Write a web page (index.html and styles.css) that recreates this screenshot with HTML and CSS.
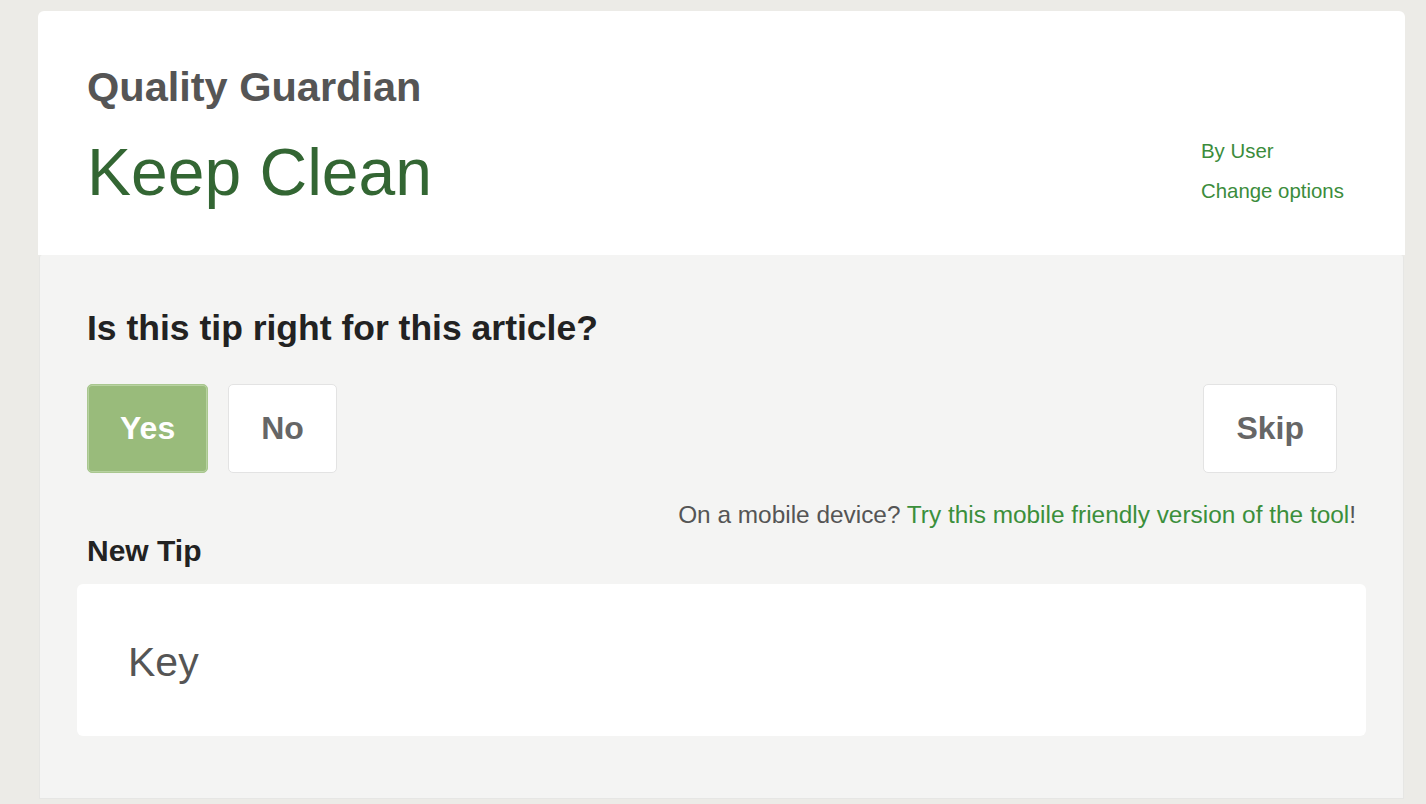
FILE: index.html
```html
<!DOCTYPE html>
<html lang="en">
<head>
<meta charset="utf-8">
<title>Quality Guardian</title>
<link rel="stylesheet" href="styles.css">
</head>
<body>
<div class="page">
  <header class="card-head">
    <div class="titles">
      <h1 class="app-name">Quality Guardian</h1>
      <h2 class="tool-name">Keep Clean</h2>
    </div>
    <div class="side-links">
      <a class="side-link" href="#">By User</a>
      <a class="side-link" href="#">Change options</a>
    </div>
  </header>
  <section class="panel">
    <div class="inner">
      <h3 class="question">Is this tip right for this article?</h3>
      <div class="actions">
        <button class="btn btn-yes" type="button">Yes</button>
        <button class="btn" type="button">No</button>
        <button class="btn btn-skip" type="button">Skip</button>
      </div>
      <p class="mobile-note">On a mobile device? <a href="#">Try this mobile friendly version of the tool</a>!</p>
      <h4 class="tip-label">New Tip</h4>
    </div>
    <div class="tip-box">Key</div>
  </section>
</div>
</body>
</html>
```

FILE: styles.css
```css
html, body {
  margin: 0;
  padding: 0;
}
body {
  background: #ecebe7;
  font-family: "Liberation Sans", Arial, Helvetica, sans-serif;
  height: 804px;
  overflow: hidden;
}
.page {
  margin: 11px 21px 0 38px;
  display: flex;
  flex-direction: column;
}
.card-head {
  background: #ffffff;
  border-radius: 6px 6px 0 0;
  display: flex;
  justify-content: space-between;
  align-items: flex-end;
  padding: 52px 57px 45px 49px;
}
.titles {
  display: flex;
  flex-direction: column;
}
.app-name {
  margin: 0;
  font-size: 41.5px;
  line-height: 48px;
  font-weight: 700;
  color: #555555;
}
.tool-name {
  margin: 23px 0 0 0;
  font-size: 66px;
  line-height: 76px;
  font-weight: 400;
  color: #336633;
}
.side-links {
  display: flex;
  flex-direction: column;
  width: 147px;
  margin-bottom: -1px;
}
.side-link {
  font-size: 20.4px;
  line-height: 40px;
  color: #3b8c3b;
  text-decoration: none;
  white-space: nowrap;
}
.panel {
  margin: 0 1px;
  background: #f4f4f3;
  border: 1px solid #e6e6e4;
  border-top: none;
  border-radius: 3px 3px 0 0;
  padding: 52px 37px 62px 37px;
  box-sizing: border-box;
  height: 544px;
}
.inner {
  padding: 0 10px;
}
.question {
  margin: 0;
  font-size: 35.5px;
  line-height: 42px;
  font-weight: 700;
  color: #222222;
}
.actions {
  display: flex;
  gap: 20px;
  margin-top: 35px;
}
.btn {
  height: 89px;
  box-sizing: border-box;
  padding: 0 32px;
  background: #ffffff;
  border: 1px solid #e3e3e3;
  border-radius: 5px;
  font-family: "Liberation Sans", Arial, Helvetica, sans-serif;
  font-size: 32px;
  font-weight: 700;
  color: #666666;
  display: flex;
  align-items: center;
  justify-content: center;
  cursor: pointer;
}
.btn-yes {
  background: #99bb7b;
  border-color: #a9c78f;
  box-shadow: inset 0 0 0 1px #b8d2a1;
  color: #ffffff;
}
.btn-skip {
  margin-left: auto;
  margin-right: 19px;
}
.mobile-note {
  margin: 28px 0 0 0;
  text-align: right;
  font-size: 24.4px;
  line-height: 28px;
  color: #555555;
}
.mobile-note a {
  color: #3b8f3b;
  text-decoration: none;
}
.tip-label {
  margin: 5px 0 0 0;
  font-size: 30px;
  line-height: 34px;
  font-weight: 700;
  color: #222222;
}
.tip-box {
  margin-top: 16px;
  background: #ffffff;
  border-radius: 6px;
  height: 152px;
  box-sizing: border-box;
  padding: 54px 48px 0 51px;
  font-size: 41px;
  line-height: 48px;
  color: #555555;
}
```
